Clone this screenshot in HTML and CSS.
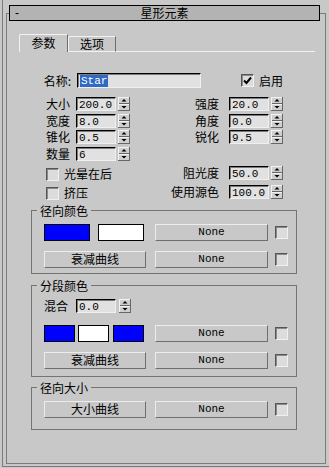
FILE: index.html
```html
<!DOCTYPE html>
<html>
<head>
<meta charset="utf-8">
<link rel="stylesheet" href="styles.css">
</head>
<body>
<div class="outer">
  <div class="rollout">
    <div class="title"><span class="minus">-</span><span class="ttl">星形元素</span><span></span></div>

    <div class="tabs">
      <div class="tab active">参数</div>
      <div class="tab">选项</div>
      <div class="tabfill"></div>
    </div>

    <div class="namerow">
      <span class="namelbl">名称:</span>
      <div class="field namefield"><span class="sel">Star</span></div>
      <span class="chk on"><svg width="11" height="11" viewBox="0 0 11 11"><path d="M2 5.5 L4.5 8 L9 2.5" fill="none" stroke="#000" stroke-width="2"/></svg></span>
      <span class="chklbl">启用</span>
    </div>

    <div class="spingrid">
      <span class="lbl">大小</span><span class="cf"><span class="field num">200.0</span></span><span class="cs"><span class="spin"></span></span>
      <span class="lbl">强度</span><span class="cf2"><span class="field num">20.0</span></span><span class="cs"><span class="spin"></span></span>

      <span class="lbl">宽度</span><span class="cf"><span class="field num">8.0</span></span><span class="cs"><span class="spin"></span></span>
      <span class="lbl">角度</span><span class="cf2"><span class="field num">0.0</span></span><span class="cs"><span class="spin"></span></span>

      <span class="lbl">锥化</span><span class="cf"><span class="field num">0.5</span></span><span class="cs"><span class="spin"></span></span>
      <span class="lbl">锐化</span><span class="cf2"><span class="field num">9.5</span></span><span class="cs"><span class="spin"></span></span>

      <span class="lbl">数量</span><span class="cf"><span class="field num">6</span></span><span class="cs"><span class="spin"></span></span>
      <span></span><span></span><span></span>
    </div>

    <div class="optgrid">
      <span class="optcell"><span class="chk"></span><span class="chklbl">光晕在后</span></span>
      <span class="lbl">阻光度</span><span class="cf2"><span class="field num">50.0</span></span><span class="cs"><span class="spin"></span></span>

      <span class="optcell"><span class="chk"></span><span class="chklbl">挤压</span></span>
      <span class="lbl">使用源色</span><span class="cf2"><span class="field num">100.0</span></span><span class="cs"><span class="spin"></span></span>
    </div>

    <fieldset class="group g1">
      <legend>径向颜色</legend>
      <div class="grow">
        <span class="sw blue wide"></span>
        <span class="sw white wide sw2"></span>
        <span class="btn none">None</span>
        <span class="chk gchk"></span>
      </div>
      <div class="grow r2">
        <span class="btn curve">衰减曲线</span>
        <span class="btn none">None</span>
        <span class="chk gchk"></span>
      </div>
    </fieldset>

    <fieldset class="group g2">
      <legend>分段颜色</legend>
      <div class="mixrow">
        <span class="mixlbl">混合</span>
        <span class="field num mixfield">0.0</span>
        <span class="spin mixspin"></span>
      </div>
      <div class="grow r3">
        <span class="sw blue narrow"></span>
        <span class="sw white narrow n2"></span>
        <span class="sw blue narrow n3"></span>
        <span class="btn none">None</span>
        <span class="chk gchk"></span>
      </div>
      <div class="grow r2">
        <span class="btn curve">衰减曲线</span>
        <span class="btn none">None</span>
        <span class="chk gchk"></span>
      </div>
    </fieldset>

    <fieldset class="group g3">
      <legend>径向大小</legend>
      <div class="grow">
        <span class="btn curve">大小曲线</span>
        <span class="btn none">None</span>
        <span class="chk gchk"></span>
      </div>
    </fieldset>
  </div>
</div>
</body>
</html>
```

FILE: styles.css
```css
* { box-sizing: border-box; }
html, body { margin: 0; padding: 0; }
body {
  width: 329px;
  height: 468px;
  overflow: hidden;
  background: #c8c8c8;
  font-family: "Noto Sans CJK SC", "Liberation Sans", sans-serif;
  font-size: 12px;
  line-height: 14px;
  color: #000;
}
.outer {
  margin-left: 2px;
  width: 327px;
  height: 467px;
  border-left: 1px solid #7c7c7c;
  border-bottom: 1px solid #7c7c7c;
  padding: 13px 0 0 3px;
}
.rollout {
  width: 320px;
  height: 451px;
  border: 1px solid #7c7c7c;
}
.title {
  margin: -9px 0 0 2px;
  width: 311px;
  height: 16px;
  border: 1px solid #000;
  background: #b3b3b3;
  display: grid;
  grid-template-columns: 1fr auto 1fr;
  align-items: center;
}
.minus { padding-left: 5px; font-family: "Liberation Sans", sans-serif; }
.tabs {
  margin: 13px 10px 0 0;
  padding-left: 12px;
  height: 18px;
  display: flex;
  align-items: flex-end;
}
.tab {
  width: 48px;
  height: 16px;
  border-top: 1px solid #f2f2f2;
  border-left: 1px solid #f2f2f2;
  border-right: 1px solid #6e6e6e;
  border-bottom: 1px solid #f2f2f2;
  border-top-left-radius: 2px;
  text-align: center;
  line-height: 14px;
}
.tab.active {
  width: 49px;
  height: 18px;
  border-bottom: none;
  padding-top: 1px;
}
.tabfill {
  flex: 1;
  height: 1px;
  border-bottom: 1px solid #f2f2f2;
}
.namerow {
  margin-top: 21px;
  height: 15px;
  display: flex;
  align-items: center;
}
.namelbl { width: 64px; text-align: right; }
.field {
  display: block;
  background: #e1e1e1;
  border: 1px solid;
  border-color: #000 #efefef #efefef #000;
  box-shadow: inset 1px 1px 0 #7a7a7a;
  font-family: "Liberation Mono", monospace;
  font-size: 11px;
  line-height: 12px;
  padding-left: 2px;
  white-space: nowrap;
  overflow: hidden;
}
.namefield { margin-left: 6px; width: 124px; height: 15px; padding-top: 1px; }
.sel { display: inline-block; background: #316ac5; color: #fff; height: 12px; padding: 0 1px; }
.chk {
  display: inline-block;
  width: 13px;
  height: 13px;
  background: #dcdcdc;
  border: 1px solid;
  border-color: #555 #f0f0f0 #f0f0f0 #555;
  box-shadow: inset 1px 1px 0 #8a8a8a;
  flex: none;
}
.chk svg { display: block; margin: 0 0 0 0; }
.namerow .chk { margin-left: 40px; }
.chklbl { margin-left: 5px; white-space: nowrap; }

.spingrid {
  margin-top: 9px;
  display: grid;
  grid-template-columns: 63px 46px 14px 89px 50px 14px;
  grid-auto-rows: 14px;
  row-gap: 2.5px;
  align-items: center;
}
.lbl { text-align: right; white-space: nowrap; }
.cf { padding-left: 6px; }
.cf2 { padding-left: 10px; }
.cs { padding-left: 2px; }
.num { width: 40px; height: 14px; padding-top: 1px; }
.spin {
  display: block;
  width: 12px;
  height: 14px;
  background-color: #cfcfcf;
  background-image:
    url("data:image/svg+xml,%3Csvg xmlns='http://www.w3.org/2000/svg' width='12' height='14'%3E%3Crect width='12' height='1' fill='%23f2f2f2'/%3E%3Crect width='1' height='14' fill='%23f2f2f2'/%3E%3Crect x='11' width='1' height='14' fill='%23666'/%3E%3Crect y='13' width='12' height='1' fill='%23666'/%3E%3Crect x='1' y='6' width='10' height='1' fill='%23666'/%3E%3Crect x='1' y='7' width='10' height='1' fill='%23f2f2f2'/%3E%3Cpath d='M6 2 L8.5 4.5 L3.5 4.5 Z' fill='%23000'/%3E%3Cpath d='M3.5 9 L8.5 9 L6 11.5 Z' fill='%23000'/%3E%3C/svg%3E");
}

.optgrid {
  margin-top: 5px;
  display: grid;
  grid-template-columns: 123px 89px 50px 14px;
  grid-auto-rows: 14px;
  row-gap: 5px;
  align-items: center;
}
.optcell {
  display: flex;
  align-items: flex-start;
  align-self: start;
  padding-left: 39px;
  height: 14px;
}
.optcell .chk { margin-top: 2px; }
.optcell .chklbl { margin-left: 5px; line-height: 16px; }

.group {
  margin: 5px 0 0 24px;
  width: 266px;
  border: 1px solid #747474;
  padding: 6px 0 5px 0;
  min-inline-size: 0;
}
.group legend {
  margin-left: 5px;
  padding: 0 3px;
  font-size: 12px;
  line-height: 14px;
}
.g2 { padding-bottom: 7px; }
.g3 { margin-top: 4px; padding-bottom: 11px; }
.grow {
  display: flex;
  align-items: center;
  height: 17px;
  padding-left: 12px;
}
.grow.r2 { margin-top: 10px; }
.grow.r3 { margin-top: 12px; }
.sw { display: block; height: 17px; border: 1px solid #000; flex: none; }
.sw.blue { background: #0000ff; }
.sw.white { background: #fff; }
.sw.wide { width: 46px; }
.sw.sw2 { margin-left: 8px; }
.sw.narrow { width: 31px; }
.sw.n2 { margin-left: 3px; }
.sw.n3 { margin-left: 4px; }
.btn {
  display: flex;
  align-items: center;
  justify-content: center;
  height: 17px;
  border: 1px solid;
  border-color: #ececec #6e6e6e #6e6e6e #ececec;
  background: #c8c8c8;
  flex: none;
  white-space: nowrap;
}
.btn.curve { width: 102px; }
.btn.none {
  width: 113px;
  margin-left: auto;
  font-family: "Liberation Mono", monospace;
  font-size: 11px;
}
.grow .sw + .btn.none, .grow .btn + .btn.none { margin-left: 11px; }
.grow .btn.curve + .btn.none { margin-left: 9px; }
.gchk { margin-left: 7px; }
.mixrow {
  display: flex;
  align-items: center;
  height: 14px;
  padding-left: 12px;
}
.mixlbl { width: 24px; }
.mixfield { margin-left: 8px; }
.mixspin { margin-left: 3px; }
```
